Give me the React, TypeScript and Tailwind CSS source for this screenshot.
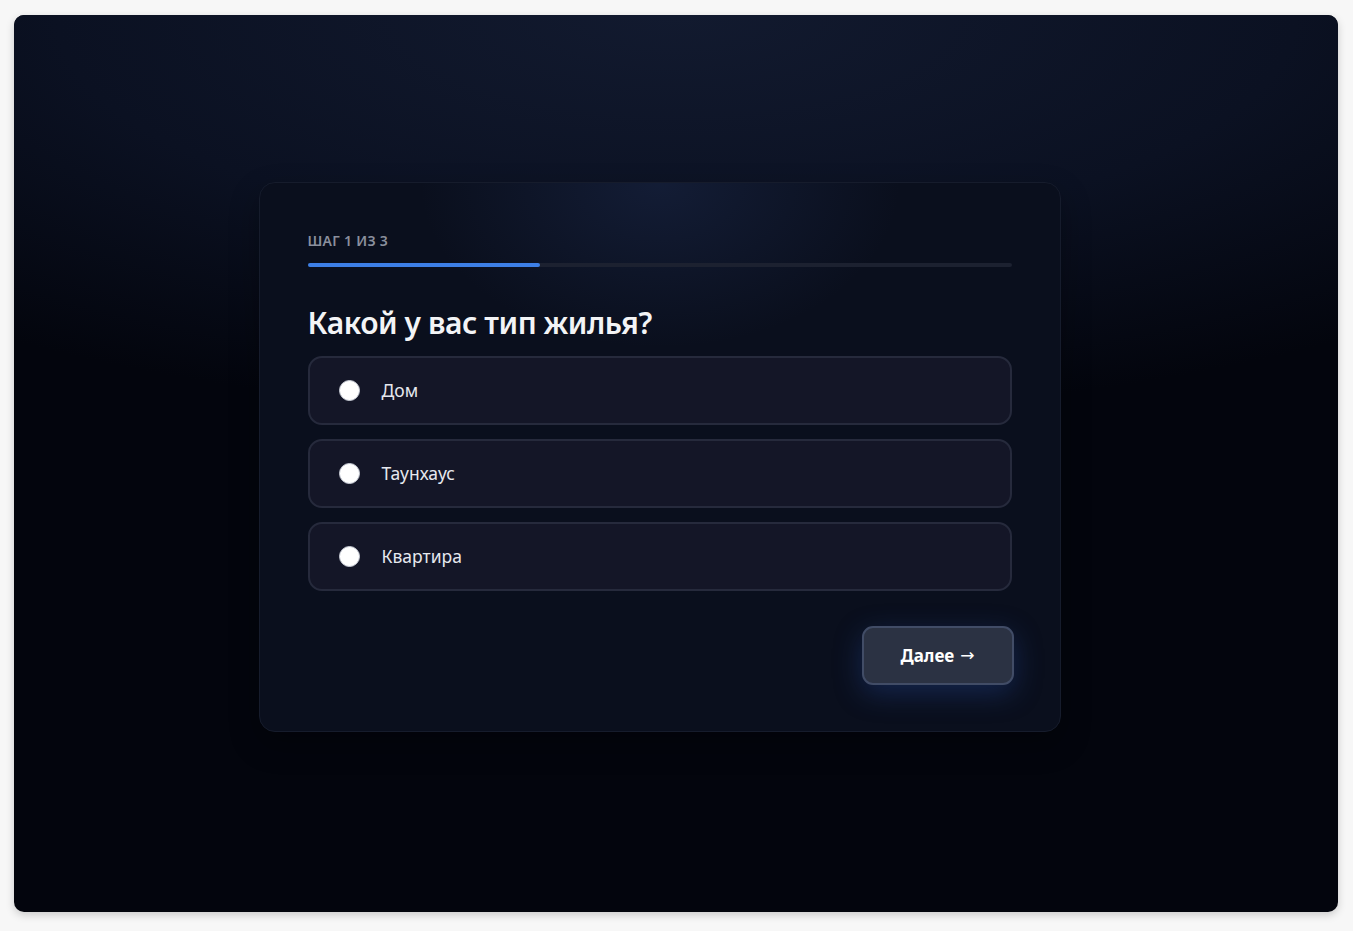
import React, { useState } from "react";

const options = ["Дом", "Таунхаус", "Квартира"];

export default function App() {
  const [sel, setSel] = useState<number | null>(null);
  return (
    <div className="min-h-screen w-full bg-[#f7f7f7] pt-[15px] pl-[14px] pr-[15px] pb-[19px]" style={{ fontFamily: '"Noto Sans", "Open Sans", sans-serif' }}>
      <div className="relative h-[897px] w-full overflow-hidden rounded-[10px] bg-[#03050d] shadow-[0_3px_8px_rgba(0,0,0,0.18)]">
        <div className="pointer-events-none absolute inset-0 bg-[radial-gradient(ellipse_85%_45%_at_50%_0%,#121a2f_0%,#0b1122_55%,rgba(3,5,13,0)_100%)]" />
        <div className="relative flex justify-center pt-[167px] pr-[33px]">
          <div className="relative w-[802px] overflow-hidden rounded-[16px] border border-[#161c2c] bg-[#0a0f1d] px-[48px] pt-[48px] pb-[46px] shadow-[0_12px_30px_rgba(0,0,0,0.3)]">
            <div className="pointer-events-none absolute inset-0 bg-[radial-gradient(ellipse_30%_30%_at_50%_0%,rgba(40,60,110,0.3)_0%,rgba(10,15,29,0)_100%)]" />
            <div className="relative">
              <div className="text-[14px] font-semibold uppercase leading-[20px] tracking-[0.02em] text-[#8a8f9d]">Шаг 1 из 3</div>
              <div className="mt-[12px] h-[4px] w-full rounded-full bg-[#1c2130]">
                <div className="h-full w-[33%] rounded-full bg-[#3d7fe6]" />
              </div>
              <h1 className="mt-[38px] text-[30px] font-semibold leading-[36px] tracking-[-0.015em] text-[#f3f4f6]">Какой у вас тип жилья?</h1>
              <div className="mt-[15px] flex flex-col gap-[14px]">
                {options.map((o, i) => (
                  <button
                    key={o}
                    onClick={() => setSel(i)}
                    className="flex h-[69px] w-full items-center rounded-[14px] border-2 border-[#262a3c] bg-[#141627] pl-[29px] text-left"
                  >
                    <span className="flex h-[21px] w-[21px] items-center justify-center rounded-full border border-[#c8ccd6] bg-white">
                      {sel === i && <span className="h-[9px] w-[9px] rounded-full bg-[#3d7fe6]" />}
                    </span>
                    <span className="ml-[22px] text-[17.5px] text-[#e6e8ee]">{o}</span>
                  </button>
                ))}
              </div>
              <div className="mt-[35px] flex justify-end">
                <button className="-mr-[2px] flex h-[59px] w-[152px] items-center justify-center gap-[6px] rounded-[11px] border-2 border-[#414c66] bg-[#2b3243] text-[17px] font-bold text-white shadow-[0_8px_28px_rgba(40,80,170,0.35)]">
                  <span>Далее</span>
                  <span className="text-[17px] font-normal" style={{ fontFamily: '"DejaVu Sans", sans-serif' }}>→</span>
                </button>
              </div>
            </div>
          </div>
        </div>
      </div>
    </div>
  );
}
